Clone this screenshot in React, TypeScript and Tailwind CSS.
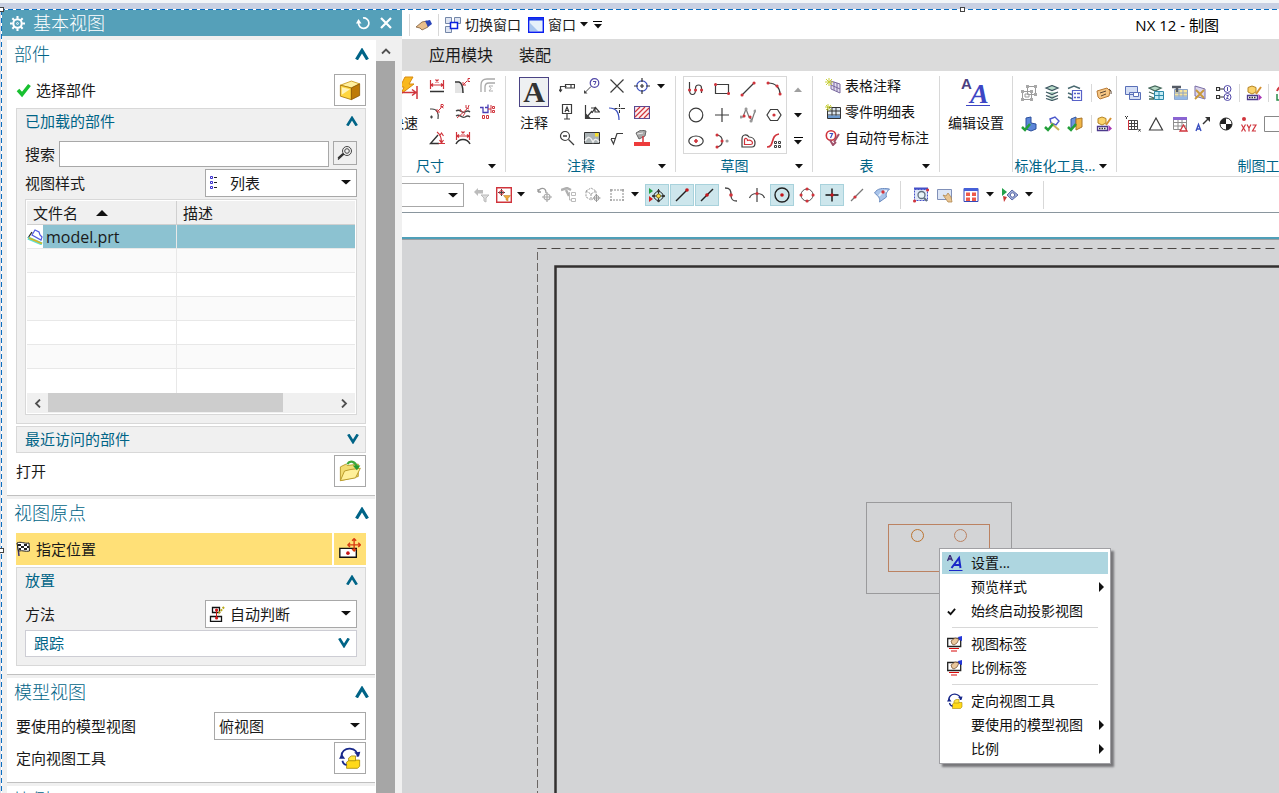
import type { ReactNode } from "react";
import clsx from "clsx";
import { twMerge } from "tailwind-merge";

const red = "#d0343c";
const ink = "#3c3c3c";
const blue = "#3a4fc0";

const icons: Record<string, ReactNode> = {
  // dimensions
  linear: (
    <>
      <path d="M1.500 2v9M14.500 2v9M2 7h12M4 5.500 2 7l2 1.500M12 5.500 14 7l-2 1.500M6.500 1.500l3 3M9.500 1.500l-3 3" stroke={red} strokeWidth="1.200" />
      <path d="M1 13.500h14" stroke="#333" strokeWidth="1.500" />
    </>
  ),
  chamfer: (
    <>
      <path d="M0 5h4l4 5v5H0z" fill="#e4e4e4" stroke="none" />
      <path d="M0 4h4c3 1 4 4 4 11" stroke="#333" strokeWidth="1.500" />
      <path d="M8 7l4-4M8 4v3h3M15 .5h-2v3h2" stroke={red} />
    </>
  ),
  thickness: (
    <>
      <path d="M1 14V7c0-4 2-6 6-6h8M5 14V9c0-3 1-4 4-4h6" stroke="#a9a9a9" strokeWidth="1.300" />
      <path d="M13 8H9l2 2.500-2 2.500h4" stroke="#b0b0b0" />
    </>
  ),
  radial: (
    <>
      <path d="M1 5h2c5 0 7 4 6 10M1 13h3M2.500 11.500v3" stroke="#444" strokeWidth="1.200" />
      <path d="M8 8l4-4M8 5v3h3M12 4V.5h2l.5 1-.5 1h-2l2.500 1.500" stroke={red} />
    </>
  ),
  curveDim: (
    <>
      <path d="M1 7c4-3 6 3 9 1s4-1 5 0M1 12c4-3 6 3 9 1s4-1 5 0" stroke="#444" strokeWidth="1.300" />
      <path d="M2 14 13 4M5 5l2 3M8 12l2-3M11 1v3l3 1M14 1l-1 3" stroke={red} />
    </>
  ),
  ordinate: (
    <>
      <path d="M0 3.500h3v5h5v-8M5 3.500h3" stroke="#4b3fb5" strokeWidth="1.300" />
      <path d="M11 1v8M8 5h3M12.500 2.500h2v2h-2zM12.500 6.500h2v2h-2zM2.500 11.500h2v3h-2zM6.500 11.500h2v3h-2z" stroke={red} />
    </>
  ),
  angular: (
    <>
      <path d="M9 5 1.500 13.500H10" stroke="#333" strokeWidth="1.400" />
      <path d="M8 2c3 2 4.500 6 4.500 11M9.500 13.500H16M10.500 6 12.500 3l2 3M10.500 10l2 3 2-3" stroke={red} strokeWidth="1.200" />
    </>
  ),
  arcLength: (
    <>
      <path d="M1.500 2v8M14.500 2v8M2 6h12M4 4.500 2 6l2 1.500M12 4.500 14 6l-2 1.500M6.500 1.500l3 3M9.500 1.500l-3 3" stroke={red} strokeWidth="1.200" />
      <path d="M1 14c3-6 11-6 14 0" stroke="#333" strokeWidth="1.500" />
    </>
  ),
  // annotation
  featureFrame: <path d="M1.500 13V8.500h6M0 11.500l1.500 2 1.500-2M6.500 6.500h9v3.500h-9zM12 6.500V10" stroke={ink} strokeWidth="1.200" />,
  balloon: (
    <>
      <circle cx="10.500" cy="5" r="4.300" stroke="#5148a8" strokeWidth="1.200" />
      <path d="M9 3.500h3L10.500 7" stroke="#5148a8" />
      <path d="M7 8.500 1.500 14" stroke="#444" />
      <path d="M0 12v3.500h3.500z" fill="#444" stroke="none" />
    </>
  ),
  cross: <path d="M1.500 1.500l13 13M14.500 1.500l-13 13" stroke={ink} strokeWidth="1.200" />,
  centerMark: (
    <>
      <circle cx="8" cy="8" r="5.200" stroke={blue} strokeWidth="1.200" />
      <path d="M8 0v4M8 12v4M0 8h4M12 8h4M8 6v4M6 8h4" stroke="#333" strokeWidth="1.200" />
    </>
  ),
  datum: <path d="M3.500 .5h9v9h-9zM8 9.500v5M5 15h6M6 8l2-5 2 5M7 6.500h2" stroke={ink} strokeWidth="1.200" />,
  roughFrame: (
    <>
      <path d="M1.500 1v13.500H16M2 14l6-7M7 4h4L8 9M11 3v5h4.500L11 3" stroke={ink} strokeWidth="1.200" />
      <path d="M1.500 9v5.500H7z" fill={ink} stroke="none" />
    </>
  ),
  centerLine: (
    <>
      <path d="M0 4c7 0 10 4 10 12" stroke={blue} strokeWidth="1.200" />
      <path d="M5.500 4.500h3M12 4.500h4M10.500 0v3M10.500 6v3M9.500 4.500h2" stroke="#333" />
    </>
  ),
  hatch: (
    <>
      <path d="M.5 2.500h15v12H.5z" fill="#fdeeee" stroke="#5a4a92" strokeWidth="1.200" />
      <path d="M1 8l5-5M1 13 11 3M5 14 15 4M10 14l5-5" stroke={red} strokeWidth="1.200" />
    </>
  ),
  zoomOut: (
    <>
      <circle cx="6" cy="6" r="4.500" stroke={ink} strokeWidth="1.200" />
      <path d="M4 6h4M9.500 9.500 15 15" stroke={ink} strokeWidth="1.300" />
    </>
  ),
  image: (
    <>
      <path d="M.5 2.500h15v11H.5z" fill="#aab2b4" stroke="#333" />
      <path d="M1 11c3-5 5-5 8 1 2-4 4-3 6 0" stroke="#eee" strokeWidth="1.500" />
      <path d="M11 3h3.500v3.500H11z" fill="#f6df2c" stroke="none" />
    </>
  ),
  surface: <path d="M2 9l2.500 5L8 3.500h6M2 8.500h5" stroke={ink} strokeWidth="1.200" />,
  paint: (
    <>
      <path d="M2 3l5-3 5 1-1 5-6 3z" fill="#a8a8a8" stroke="#666" />
      <path d="M3 4l6-1" stroke="#eee" />
      <path d="M9 6v6" stroke={red} strokeWidth="1.500" />
      <path d="M0 12h16v4H0z" fill="#ee3b3b" stroke="none" />
    </>
  ),
  // sketch
  profile: (
    <>
      <path d="M1.500 1v8c0 6 6 6 6 0V7c0-4 6-4 6 0v5" stroke={ink} strokeWidth="1.200" />
      <path d="M1.500 9h.1M7.500 9h.1M13.500 9h.1" stroke={red} strokeWidth="3" strokeLinecap="round" />
    </>
  ),
  rect: (
    <>
      <path d="M1.500 3.500h13v9h-13z" stroke={ink} strokeWidth="1.200" />
      <path d="M1.500 3.500h.1M14.500 12.500h.1" stroke={red} strokeWidth="3" strokeLinecap="round" />
    </>
  ),
  line: (
    <>
      <path d="M2 14 14 2" stroke={ink} strokeWidth="1.200" />
      <path d="M2 14h.1M14 2h.1" stroke={red} strokeWidth="3" strokeLinecap="round" />
    </>
  ),
  arc: (
    <>
      <path d="M2 2c8 0 12 5 12 11" stroke={ink} strokeWidth="1.200" />
      <path d="M2 2h.1M11 5h.1M14 13h.1" stroke={red} strokeWidth="3" strokeLinecap="round" />
    </>
  ),
  circle: <circle cx="8" cy="8" r="6.800" stroke={ink} strokeWidth="1.200" />,
  plus: <path d="M8 1v14M1 8h14" stroke={ink} strokeWidth="1.200" />,
  spline: (
    <>
      <path d="M1 10h2l3-8 3 8 3 3 3-9" stroke="#777" strokeWidth="1.200" />
      <path d="M4 9h.1M10 10h.1" stroke={red} strokeWidth="3" strokeLinecap="round" />
      <path d="M6 2h.1M15 4h.1M11 14h.1M1 10h.1" stroke="#999" strokeWidth="3" strokeLinecap="round" />
    </>
  ),
  polygon: (
    <>
      <path d="M4.500 2.500h7L15 8l-3.500 5.500h-7L1 8z" stroke={ink} strokeWidth="1.200" />
      <circle cx="8" cy="8" r="1.600" fill={red} stroke="none" />
    </>
  ),
  ellipse: (
    <>
      <ellipse cx="8" cy="8" rx="7.200" ry="5" stroke={ink} strokeWidth="1.200" />
      <path d="M8 6v4M6 8h4" stroke={red} strokeWidth="1.700" />
    </>
  ),
  conic: (
    <>
      <path d="M3 2c7 1 7 11 0 12" stroke={ink} strokeWidth="1.200" />
      <path d="M3 2h.1M3 14h.1M8 8h.1" stroke={red} strokeWidth="3" strokeLinecap="round" />
      <path d="M13 8h.1" stroke="#999" strokeWidth="3" strokeLinecap="round" />
    </>
  ),
  offset: (
    <>
      <path d="M2 14V6c0-5 5-5 7-2 4 0 6 3 6 6 0 2-1 4-3 4z" stroke={ink} strokeWidth="1.200" />
      <path d="M4.500 11.500V6.500c1-2 3-1 3 1 3-1 5 1 5 2.500 0 1-1 1.500-2 1.500z" stroke={red} strokeWidth="1.200" />
    </>
  ),
  pattern: (
    <>
      <path d="M1 14c8 0 3-12 12-13" stroke={red} strokeWidth="1.700" />
      <path d="M8.500 8.500h2v2h-2zM12.500 8.500h2v2h-2zM8.500 12.500h2v2h-2zM12.500 12.500h2v2h-2z" stroke={ink} />
    </>
  ),
  // tables
  noteTable: (
    <>
      <path d="M6 3l9 3v9l-9-4zM6 7l9 4M9 4v8M12 5v9" fill="#e4def2" stroke="#7a6a9e" />
      <path d="M4 0v8M0 4h8M1 1l6 6M7 1 1 7" stroke="#c8cf3a" />
    </>
  ),
  partsTable: (
    <>
      <path d="M2.500 3.500h13v11h-13zM2.500 7h13M2.500 11h13M7 3.500v11M11 3.500v11" fill="#dfe8f0" stroke="#333" />
      <path d="M3 11.500h12v2.500H3z" fill="#6d9bd0" stroke="none" />
      <path d="M3 0v7M0 3h7M1 1l5 5M6 1 1 6" stroke="#c8cf3a" />
    </>
  ),
  autoBalloon: (
    <>
      <circle cx="6" cy="5.500" r="4.700" fill="#fff" stroke={red} strokeWidth="1.600" />
      <path d="M4.500 3.500h3L5.500 8" stroke={blue} strokeWidth="1.200" />
      <path d="M14 4 9 12M5 10l3 5 3-3" stroke="#a0506a" strokeWidth="2" />
    </>
  ),
  // standardisation tools
  frames: (
    <>
      <path d="M1.500 6.500h9v8h-9zM6.500 1.500h8v8h-8zM4 9h4v3H4z" stroke="#9b9b9b" />
      <path d="M0 5h3v3H0zM9 5h3v3H9zM0 13h3v3H0zM9 13h3v3H9zM5 0h3v3H5zM13 0h3v3h-3zM13 8h3v3h-3z" fill="#a8a8a8" stroke="none" />
    </>
  ),
  layers: (
    <>
      <path d="M2 3l6-2.500L14 3 8 5.500zM2 7l6 2.500L14 7M2 10.500 8 13l6-2.500M2 13.500l6 2 6-2" fill="#b7dcc9" stroke="#3d5560" strokeWidth="1.200" />
    </>
  ),
  layerList: (
    <>
      <path d="M1 3.500 7 1l6 2.500M1 8l5 2M1 12l5 2" stroke="#4a6a70" strokeWidth="1.500" />
      <path d="M5.500 5.500h9v10h-9z" fill="#fff" stroke="#5862c8" strokeWidth="1.200" />
      <path d="M7 8.500h2M10 8.500h3M7 12.500h2M10 12.500h3" stroke="#5862c8" strokeWidth="1.500" />
    </>
  ),
  tag: (
    <>
      <path d="M1 6l10-3 3 3-1 5-9 3-2-2z" fill="#f6c684" stroke="#b87a35" />
      <path d="M4 8l6-2M5 11l5-2M13 4c2 1 2.500 3 2 5" stroke="#5a4634" />
    </>
  ),
  blockCheck: (
    <>
      <path d="M5 2l5-1v6l5 1v5l-5 2-5-2z" fill="#5b86d8" stroke="#2c4f9c" />
      <path d="M1 11l3 3 5-6" stroke="#23a03a" strokeWidth="2.500" />
    </>
  ),
  sketchCheck: (
    <>
      <path d="M6 3l5-2 4 4-3 4-5-2z" fill="#fff" stroke="#4b58cc" strokeWidth="1.400" />
      <path d="M7 7l8 7" stroke="#c9b458" strokeWidth="2" />
      <path d="M1 11l3 3 5-6" stroke="#23a03a" strokeWidth="2.500" />
    </>
  ),
  cubeCheck: (
    <>
      <path d="M4 3l5-2v9l-5 2z" fill="#6b93dc" stroke="#35589e" />
      <path d="M9 3l6-1v9l-6 3z" fill="#f0b545" stroke="#a9742a" />
      <path d="M1 11l3 3 5-6" stroke="#23a03a" strokeWidth="2.500" />
    </>
  ),
  cubeEdit: (
    <>
      <path d="M2 2.500 6 1l4 1.500V7L6 9 2 7z" fill="#fbd36a" stroke="#b58425" />
      <path d="M15 2l-5 7" stroke="#d49032" strokeWidth="2" />
      <path d="M1.500 10.500h10v4h-10z" fill="#fff" stroke="#4c3a8c" strokeWidth="1.300" />
      <path d="M3 12.500h7" stroke="#333" strokeWidth="1.500" strokeDasharray="1.500 1" />
      <path d="M12.500 9l3.500 3.500-3.500 3z" fill="#a935b5" stroke="none" />
    </>
  ),
  sheets: (
    <>
      <path d="M.5 1.500h12v8H.5zM4.500 7.500h11v7h-11z" fill="#d5dff5" stroke="#5a70b8" />
      <path d="M8.500 7.500h5v4h-5z" fill="#fff" stroke="#5a70b8" />
    </>
  ),
  layerGrid: (
    <>
      <path d="M1 3l6-2 6 2-6 3zM1 7l5 2M1 11l5 2M1 14h5" fill="#b5d8c5" stroke="#45685c" strokeWidth="1.300" />
      <path d="M6.500 6.500h9v8h-9zM11 6.500v8M6.500 10.500h9" fill="#c6ecf5" stroke="#2a88a8" />
    </>
  ),
  hammerTable: (
    <>
      <path d="M2.500 4.500h13v10h-13zM2.500 8h13M2.500 11h13M7 4.500v10M11 4.500v10" fill="#f8e49a" stroke="#8ba2c8" />
      <path d="M3 11.500h12v3H3z" fill="#94b8e6" stroke="none" />
      <path d="M0 2h9M5 2v5" stroke="#555b66" strokeWidth="2.500" />
    </>
  ),
  mirror: (
    <>
      <path d="M3 1l10 3v10L3 11z" fill="#dcd6ee" stroke="#7a6ea6" />
      <path d="M3 14 12 5M4 5l8 8" stroke="#c8993a" strokeWidth="1.800" />
    </>
  ),
  refList: (
    <>
      <path d="M.5 2.500h3v3h-3zM.5 10.500h3v3h-3zM4 4h4M4 12h4" stroke="#333" strokeWidth="1.200" />
      <circle cx="11.500" cy="4" r="3.500" stroke="#5148a8" />
      <circle cx="11.500" cy="12" r="3.500" stroke="#5148a8" />
      <path d="M11.500 2v4M10.500 10.500h2l-2 3h2" stroke="#5148a8" />
    </>
  ),
  csys: (
    <>
      <path d="M2 9v6h6" stroke="#2a8c4a" strokeWidth="1.500" />
      <path d="M2 6c2-6 9-6 11-2" stroke={red} strokeWidth="2" />
      <path d="M7 9h5v5H7z" fill="#f4bb4a" stroke="none" />
    </>
  ),
  gridXY: (
    <>
      <path d="M3.500 4.500h9v9h-9zM6.500 4.500v9M9.500 4.500v9M3.500 7.500h9M3.500 10.500h9" stroke="#444" />
      <path d="M3.500 4v10" stroke={red} />
      <path d="M0 0l1.500 1.500L3 0M1.500 1.500V3M13.500 13l2 2.500M15.500 13l-2 2.500" stroke="#333" />
    </>
  ),
  triangle: <path d="M8 2l6.500 12h-13z" stroke={ink} strokeWidth="1.200" />,
  tableTri: (
    <>
      <path d="M1.500 2.500h13v11h-13zM1.500 6.500h13M1.500 10h13M6 3v10M10 3v10" stroke="#8c8c8c" />
      <path d="M1 1h14v3H1z" fill="#8a64d2" stroke="none" />
      <path d="M11.500 9l3.500 6H8z" fill="#fff" stroke={red} strokeWidth="1.300" />
    </>
  ),
  leaderA: (
    <>
      <path d="M1 15 3.500 8.500 6 15M2 13h3" stroke={blue} strokeWidth="1.400" />
      <path d="M8 8l5-5" stroke="#333" strokeWidth="1.400" />
      <path d="M10 1h5v5z" fill="#333" stroke="none" />
    </>
  ),
  gravity: (
    <>
      <circle cx="8" cy="8" r="6" fill="#fff" stroke="#222" />
      <path d="M8 8V2a6 6 0 0 0-6 6zM8 8v6a6 6 0 0 0 6-6z" fill="#222" stroke="none" />
    </>
  ),
  xyz: (
    <>
      <circle cx="3" cy="3" r="2" fill={red} stroke="none" />
      <path d="M.5 8.500l4 7M4.500 8.500l-4 7M6 8.500 8 12l2-3.500M8 12v3.500M11.500 9h3.500l-3.500 6H15" stroke={red} strokeWidth="1.200" />
    </>
  ),
  blank: <path d="M.5.5h15v15H.5z" fill="#fff" stroke="#888" />,
  // selection bar
  filterReset: (
    <>
      <path d="M0 5l4-4v2h5v3.500H4V9z" fill="#bcbcbc" stroke="none" />
      <path d="M7 8h8l-3 3v4l-2-1v-3z" fill="#dcdcdc" stroke="#bbb" />
    </>
  ),
  filter: (
    <>
      <path d="M.7.7h14.600v14.600H.7z" fill="#fff" stroke={red} strokeWidth="1.400" />
      <path d="M5.500 2v7M2 5.500h7" stroke="#444" />
      <circle cx="5.500" cy="5.500" r="2" stroke={red} />
      <path d="M7.500 8.500h7l-2.500 3V14l-2-1v-1.500z" fill="#f0a93a" stroke="#b87a20" strokeWidth=".5" />
    </>
  ),
  undoTarget: (
    <>
      <path d="M1 5V2M1 5h3M1 5c2-5 8-5 8 1" stroke="#999" strokeWidth="1.300" />
      <circle cx="10" cy="10" r="3" stroke="#aaa" strokeWidth="1.200" />
      <path d="M10 5v10M5 10h10" stroke="#aaa" strokeWidth="1.200" />
    </>
  ),
  hammerTree: (
    <>
      <path d="M0 3l6-2 4 2M5 3l3 6" stroke="#b0b0b0" strokeWidth="2.500" />
      <path d="M10.500 5.500h4v3h-4zM10.500 11.500h4v3h-4zM8.500 5v8h2" stroke="#bbb" />
    </>
  ),
  cubeTarget: (
    <>
      <path d="M1 4l5-3 5 3v6l-5 3-5-3zM1 4l5 3 5-3M6 7v6" stroke="#999" strokeDasharray="2 1" />
      <circle cx="11.500" cy="11" r="2.500" stroke="#999" fill="#fff" />
      <path d="M11.500 7v8M8 11h7.500" stroke="#999" />
    </>
  ),
  marquee: (
    <>
      <path d="M2 3h12v10H2z" stroke="#888" strokeDasharray="2 1" />
      <path d="M1 2h2v2H1zM13 2h2v2h-2zM1 12h2v2H1zM13 12h2v2h-2z" fill="#aaa" stroke="none" />
    </>
  ),
  snapAll: (
    <>
      <path d="M0 1l4 3-4 3z" fill="#20a040" stroke="none" />
      <path d="M0 9l4 3-4 3z" fill="#d42020" stroke="none" />
      <path d="M9.500 2v13M3 9h13" stroke="#222" />
      <circle cx="9.500" cy="9" r="4.500" stroke="#222" />
      <circle cx="9.500" cy="9" r="2" fill="#ffe14a" stroke="#8a7a20" />
      <path d="M9.500 4h.1M9.500 14h.1M4.500 9h.1M14.500 9h.1" stroke="#333" strokeWidth="2.500" strokeLinecap="round" />
    </>
  ),
  snapEnd: (
    <>
      <path d="M2 14 13 3" stroke="#222" strokeWidth="1.400" />
      <circle cx="13" cy="3" r="1.800" fill="#c4161c" stroke="none" />
    </>
  ),
  snapMid: (
    <>
      <path d="M2 14 14 2" stroke="#222" strokeWidth="1.400" />
      <circle cx="8" cy="8" r="1.800" fill="#c4161c" stroke="none" />
    </>
  ),
  snapCtrl: (
    <>
      <path d="M1 1c5 0 6 2 6 7s2 6 6 6" stroke="#444" strokeWidth="1.300" />
      <circle cx="7" cy="8" r="1.800" fill={red} stroke="none" />
    </>
  ),
  snapCross: (
    <>
      <path d="M.5 11c2-6 13-6 15 0M8 1v14" stroke="#444" strokeWidth="1.200" />
      <circle cx="8" cy="6.500" r="1.600" fill={red} stroke="none" />
    </>
  ),
  snapCenter: (
    <>
      <circle cx="8" cy="8" r="7" stroke="#222" strokeWidth="1.400" />
      <circle cx="8" cy="8" r="1.800" fill="#c4161c" stroke="none" />
    </>
  ),
  snapQuad: (
    <>
      <circle cx="8" cy="8" r="6" stroke="#555" />
      <path d="M8 2h.1M8 14h.1M2 8h.1M14 8h.1" stroke={red} strokeWidth="3" strokeLinecap="round" />
    </>
  ),
  snapPoint: (
    <>
      <path d="M8 1.500v13M1.500 8h13" stroke="#111" strokeWidth="1.400" />
      <circle cx="8" cy="8" r="1.700" fill="#c4161c" stroke="none" />
    </>
  ),
  snapCurve: (
    <>
      <path d="M2 14 14 2" stroke="#777" strokeWidth="1.200" />
      <circle cx="6" cy="10" r="1.600" fill={red} stroke="none" />
    </>
  ),
  snapFace: (
    <>
      <path d="M.5 6c3-5 8-5 15-4-3 3-4 5-3 8l-7 5c1-3-1-6-5-9z" fill="#a9c4ea" stroke="#6c8cc0" />
      <path d="M5 9c2-3 4-5 8-5" stroke="#e6f0fc" strokeWidth="2" />
      <circle cx="9" cy="5" r="1.700" fill={red} stroke="none" />
    </>
  ),
  zoomWindow: (
    <>
      <path d="M1.500 2.500h13v11h-13z" fill="#e0e8f8" stroke="#4450c8" strokeDasharray="2 1" />
      <path d="M1 1.500h14" stroke="#4450c8" strokeWidth="2" />
      <circle cx="8.500" cy="8" r="3.500" fill="#e8f4f8" stroke="#607080" strokeWidth="1.300" />
      <path d="M11 11l3 3" stroke="#607080" strokeWidth="2" />
      <path d="M14.500 3h.1M1.500 14h.1" stroke={red} strokeWidth="3" strokeLinecap="round" />
    </>
  ),
  pan: (
    <>
      <path d="M.5 2.500h14v10H.5z" fill="#dde6f6" stroke="#8090b8" />
      <path d="M6 8l3 1 2-3 3 4 1 5h-4z" fill="#e8c492" stroke="#b08850" strokeWidth=".8" />
    </>
  ),
  fit: (
    <>
      <path d="M1 1.500h14v13H1z" fill="#fff" stroke="#3648b8" />
      <path d="M1 1h14v3H1z" fill="#4560d8" stroke="none" />
      <path d="M3 5.500h4v3.500H3zM9 5.500h4v3.500H9zM3 10.500h4V14H3zM9 10.500h4V14H9z" fill="#ee5a4a" stroke="none" />
    </>
  ),
  orient: (
    <>
      <path d="M0 1l5 4-5 4z" fill="#22a04a" stroke="none" />
      <path d="M1 9l4 1-3 5z" fill="#c83a3a" stroke="none" />
      <path d="M5 8l5-5 6 5-6 5z" fill="#a2b0dc" stroke="#5d6ca8" />
      <circle cx="10.500" cy="8" r="2.200" fill="#fff" stroke="#5d6ca8" />
    </>
  ),
  // title bar
  hand: (
    <>
      <path d="M0 10l6-5 5-1 1 6-6 3-2-2z" fill="#e9bf8c" stroke="#7c5b3a" strokeWidth=".8" />
      <path d="M9 4l5-1 2 4-4 3z" fill="#2b45b8" stroke="none" />
    </>
  ),
  switchWin: (
    <>
      <path d="M.5.5h6v6h-6zM9.500.5h6v6h-6zM.5 9.500h6v6h-6z" fill="#dfe5f2" stroke="#7487a8" />
      <path d="M5.500 5.500h7v6h-7z" fill="#fff" stroke="#0a20e0" strokeWidth="1.500" />
    </>
  ),
  window: (
    <>
      <path d="M.7.7h14.600v14.600H.7z" fill="#e6f1fa" stroke="#0a1ef0" strokeWidth="1.400" />
      <path d="M2 6v8h8z" fill="#a7c6ee" stroke="none" />
      <path d="M1 1h14v2.500H1z" fill="#1736e8" stroke="none" />
    </>
  ),
  // dialog
  check: <path d="M2 8l4 4.500L13.500 3" stroke="#18c030" strokeWidth="3.500" />,
  flag: (
    <>
      <path d="M1.500 2 3 15" stroke="#3a3070" strokeWidth="1.500" />
      <path d="M1 2c4-2 7 1 12 0l.5 8c-4 1-7-1-11 0z" fill="#fff" stroke="#222" />
      <path d="M2 3h3v2H2zM8 3h3v2H8zM5 5h3v2H5zM11 5h2v2h-2zM3 7h2v2H3zM8 7h3v2H8z" fill="#222" stroke="none" />
    </>
  ),
  find: (
    <>
      <circle cx="10" cy="6" r="4.500" stroke="#444" />
      <circle cx="10" cy="6" r="2.300" stroke="#444" />
      <path d="M7 9l-6 5.500M6 8.500l-5 4.500" stroke="#333" strokeWidth="1.300" />
    </>
  ),
  cube: (
    <>
      <path d="M1 4.500 9 1.500l6 2-6 3z" fill="#fff0a0" stroke="#c79414" strokeWidth=".6" />
      <path d="M1 4.500l8 2V15l-8-2.500z" fill="#ffd640" stroke="#a87408" strokeWidth=".6" />
      <path d="M9 6.500l6-3V12l-6 3z" fill="#bd7a08" stroke="#8a5806" strokeWidth=".6" />
      <path d="M2 6l6 1.500-6 4z" fill="#fff3b8" stroke="none" />
    </>
  ),
  folder: (
    <>
      <path d="M1 5l4-2 1 1 8-1v9L1 15z" fill="#f2dc72" stroke="#b89a2a" strokeWidth=".7" />
      <path d="M1 15l3-7 4-1 7.500-1L12 13z" fill="#fff09a" stroke="#b89a2a" strokeWidth=".7" />
      <path d="M6 3c2-3 6-2 7 2" stroke="#40a83a" strokeWidth="1.600" />
      <path d="M10 4h5.500L13 7.500z" fill="#259a30" stroke="none" />
    </>
  ),
  place: (
    <>
      <path d="M.6 7.500h12v6.500h-12z" fill="#fff" stroke="#111" />
      <circle cx="6.500" cy="11" r="1.300" fill="#c81414" stroke="none" />
      <path d="M11 .5v9M6.500 5h9M9.500 2 11 .5 12.500 2M9.500 8 11 9.500 12.500 8M8 3.500 6.500 5 8 6.500M14 3.500 15.500 5 14 6.500" stroke="#d83a10" />
    </>
  ),
  list: (
    <>
      <path d="M1.500 1.500h2v2h-2zM1.500 6.500h2v2h-2zM1.500 11.500h2v2h-2z" stroke="#3a30d0" />
      <path d="M5 2.500h3M5 7.500h3M5 12.500h3" stroke="#222" />
    </>
  ),
  infer: (
    <>
      <path d="M3.500 1.500h7v5h-7zM1.500 10.500h11v5h-11z" fill="#fff" stroke="#111" strokeWidth="1.300" />
      <path d="M7.500 3v10" stroke="#d01818" />
      <path d="M7.500 4h.1M7.500 12h.1" stroke="#d01818" strokeWidth="3" strokeLinecap="round" />
      <path d="M15 1 9 8" stroke="#b8a818" strokeWidth="2" strokeDasharray="2 1" />
    </>
  ),
  part: (
    <>
      <path d="M5 6l3-5 4 2 1 3 2 2-1 3z" fill="#fff" stroke="#5058e0" strokeWidth="1.200" />
      <path d="M1 9l4-6" stroke="#222" strokeWidth="1.300" />
      <path d="M1 9l14 6" stroke="#62e0d0" strokeWidth="3" />
      <path d="M2 9l13 5.500" stroke="#d8b420" strokeWidth="1.500" />
    </>
  ),
  rotateView: (
    <>
      <path d="M5.500 11l2-1.500H15V14l-1.500 1.500h-8z" fill="#ffd91a" stroke="#a88a08" strokeWidth=".6" />
      <path d="M7 8l2-1.500h3V10H7z" fill="#ffe640" stroke="#a88a08" strokeWidth=".6" />
      <path d="M2 8C1 3 5 1 8 1.200 11 1.500 13.500 3 13.500 7M2.500 10c.5 2 2 3 3 3" stroke="#18288a" strokeWidth="1.300" />
      <path d="M0 8.500 2 5l2.500 3.500zM11 4l4.500-.5L14.500 7z" fill="#18288a" stroke="none" />
    </>
  ),
  label: (
    <>
      <path d="M.7 2.500h13v8H.7z" fill="#fff" stroke="#222" strokeWidth="1.300" />
      <path d="M2 12.500h10M4 15h6" stroke="#d80808" strokeWidth="1.200" />
      <path d="M4 5l4-3 4 1-2 4-3 2-2-1z" fill="#eac79c" stroke="#7c5b3a" strokeWidth=".8" />
      <path d="M11 1l4-1v5l-3-1z" fill="#2336d8" stroke="none" />
    </>
  ),
  styleA: (
    <>
      <path d="M.5 6 3 0l2.500 6M1.500 4h3" stroke="#3a2a78" strokeWidth="1.300" />
      <path d="M4.500 13 12 3l1.500 10M7 10h6" stroke="#1a28c8" strokeWidth="2" />
      <path d="M2 15.500h13.500" stroke="#1a28c8" />
    </>
  ),
};

function Icon({ name, size = "size-4", className }: { name: string; size?: string; className?: string }) {
  return (
    <svg viewBox="0 0 16 16" fill="none" className={clsx("block shrink-0", size, className)}>
      {icons[name]}
    </svg>
  );
}

function Caret({ className }: { className?: string }) {
  return (
    <svg
      viewBox="0 0 8 5"
      preserveAspectRatio="none"
      className={twMerge("block h-[5px] w-2 shrink-0", className)}
    >
      <path d="M0 0h8L4 4.500z" fill="#111" />
    </svg>
  );
}

function CaretButton({ className }: { className?: string }) {
  return (
    <button aria-label="更多" className={twMerge("flex h-6 w-3 shrink-0 items-center justify-center", className)}>
      <Caret />
    </button>
  );
}

function Chevron({ down = false, size = "h-3 w-[14px]" }: { down?: boolean; size?: string }) {
  return (
    <svg viewBox="0 0 14 12" preserveAspectRatio="none" fill="none" className={clsx("block shrink-0", size)}>
      <path d={down ? "M1.500 .5 7 9.500 12.500 .5" : "M1.500 11.500 7 2.500l5.500 9"} stroke="#006487" strokeWidth="3.200" />
    </svg>
  );
}

function Tool({ name, size, className }: { name: string; size?: string; className?: string }) {
  return (
    <button
      aria-label={name}
      className={twMerge("flex h-[26px] shrink-0 items-center justify-center", className)}
    >
      <Icon name={name} size={size} />
    </button>
  );
}

/* ---------- dialog ---------- */

function Section({ title, children }: { title: string; children?: ReactNode }) {
  return (
    <section className="mb-[3px] border-b border-[#c0c0c0] bg-white">
      <button className="flex h-[30px] w-full items-center justify-between pr-[6px] pb-[2px] pl-[7px] text-lg leading-6 font-light text-[#006487]">
        <span>{title}</span>
        <Chevron />
      </button>
      <div className="flex flex-col gap-[2px] px-[9px] pt-1 pb-2">{children}</div>
    </section>
  );
}

function Group({ title, children }: { title: string; children: ReactNode }) {
  return (
    <div className="border border-[#d8d8d8] bg-[#f0f0f0] pb-2">
      <button className="flex h-6 w-full items-center justify-between pr-[7px] pl-2 text-[#006487]">
        <span>{title}</span>
        <Chevron size="h-[10px] w-3" />
      </button>
      <div className="flex flex-col gap-[2px] px-2 pt-2">{children}</div>
    </div>
  );
}

function Collapsed({ title, className }: { title: string; className: string }) {
  return (
    <button
      className={clsx(
        "flex h-[27px] w-full items-center justify-between border pr-[6px] pb-[2px] pl-2 text-[#006487]",
        className,
      )}
    >
      <span>{title}</span>
      <Chevron down size="h-[10px] w-3" />
    </button>
  );
}

function SelectRow({ id, label, value, icon }: { id: string; label: string; value: string; icon?: string }) {
  return (
    <div className="flex items-center justify-between">
      <label htmlFor={id}>{label}</label>
      <div className="relative">
        <select
          id={id}
          defaultValue={value}
          className={clsx(
            "block h-7 w-[152px] appearance-none border border-[#a8a8a8] bg-white text-[#1a1a1a]",
            icon ? "pl-6" : "pl-1",
          )}
        >
          <option>{value}</option>
        </select>
        {icon && <Icon name={icon} className="pointer-events-none absolute top-[6px] left-1" />}
        <Caret className="pointer-events-none absolute top-[11px] right-[6px] w-[10px]" />
      </div>
    </div>
  );
}

function SquareButton({ name, className }: { name: string; className?: string }) {
  return (
    <button
      aria-label={name}
      className={clsx("flex size-8 shrink-0 items-center justify-center", className ?? "border border-[#a8a8a8] bg-white")}
    >
      <Icon name={name} size="size-[22px]" />
    </button>
  );
}

function FileTable() {
  return (
    <div className="border border-[#d8d8d8] bg-white p-px">
      <table className="w-full table-fixed border-separate border-spacing-0">
        <thead>
          <tr className="h-6 bg-[#f0f0f0] text-left">
            <th className="h-6 w-[150px] border-r border-b border-[#d0d0d0] p-0 pl-[6px] leading-5 font-normal">
              <span className="flex items-center gap-[18px]">
                文件名
                <svg viewBox="0 0 12 6" className="h-[6px] w-3">
                  <path d="M6 0l6 6H0z" fill="#111" />
                </svg>
              </span>
            </th>
            <th className="h-6 border-b border-[#d0d0d0] p-0 pl-[6px] leading-5 font-normal">描述</th>
          </tr>
        </thead>
        <tbody>
          <tr className="bg-[#8cc2d1]">
            <td className="h-6 border-r border-b border-[#e8e8e8] p-0">
              <span className="flex items-center">
                <span className="flex h-[23px] w-4 items-center bg-white">
                  <Icon name="part" />
                </span>
                <span className="pl-[3px] text-base leading-5">model.prt</span>
              </span>
            </td>
            <td className="h-6 border-b border-[#e8e8e8] p-0" />
          </tr>
          {[0, 1, 2, 3, 4, 5].map((i) => (
            <tr key={i} className="odd:bg-white even:bg-[#fafafa]">
              <td className={clsx("h-6 border-r border-[#e8e8e8] p-0", i < 5 && "border-b")} />
              <td className={clsx("h-6 border-[#e8e8e8] p-0", i < 5 && "border-b")} />
            </tr>
          ))}
        </tbody>
      </table>
      <div className="flex h-5 items-center bg-[#f0f0f0]">
        <button aria-label="向左" className="flex h-5 w-[21px] items-center justify-center">
          <svg viewBox="0 0 7 9" fill="none" className="h-[9px] w-[7px]">
            <path d="M6 .5 2 4.500l4 4" stroke="#505050" strokeWidth="1.800" />
          </svg>
        </button>
        <div className="flex h-[19px] flex-1 self-start">
          <div className="w-[82%] bg-[#cdcdcd]" />
        </div>
        <button aria-label="向右" className="flex h-5 w-[21px] items-center justify-center">
          <svg viewBox="0 0 7 9" fill="none" className="h-[9px] w-[7px]">
            <path d="M1 .5l4 4-4 4" stroke="#505050" strokeWidth="1.800" />
          </svg>
        </button>
      </div>
    </div>
  );
}

function Dialog() {
  return (
    <aside className="flex w-[400px] shrink-0 flex-col bg-[#f0f0f0] text-[15px] leading-5">
      <header className="flex h-[26px] shrink-0 items-center bg-[#55a0b9] pr-[9px] pl-2 text-lg leading-6 font-light text-white">
        <svg viewBox="0 0 16 16" fill="none" stroke="#fff" className="size-[15px]">
          <circle cx="8" cy="8" r="4.500" strokeWidth="2.200" />
          <circle cx="8" cy="8" r="1" />
          <path d="M8 0v3M8 13v3M0 8h3M13 8h3M2.500 2.500l2 2M11.500 11.500l2 2M13.500 2.500l-2 2M4.500 11.500l-2 2" strokeWidth="2.200" />
        </svg>
        <h1 className="flex-1 pl-2">基本视图</h1>
        <button aria-label="重置" className="mr-[9px]">
          <svg viewBox="0 0 14 14" fill="none" className="block size-[14px]">
            <path d="M7 2a5.200 5.200 0 1 1-4.500 5" stroke="#fff" strokeWidth="1.700" />
            <path d="M0 7.500 2.500 3l3 4.500z" fill="#fff" />
          </svg>
        </button>
        <button aria-label="关闭">
          <svg viewBox="0 0 14 14" fill="none" className="block size-[14px]">
            <path d="M2 2l10 10M12 2 2 12" stroke="#fff" strokeWidth="2.200" />
          </svg>
        </button>
      </header>

      <div className="flex min-h-0 flex-1 pt-1 pr-[7px] pl-[5px]">
        <div className="min-w-0 flex-1 overflow-hidden">
          <Section title="部件">
            <div className="flex items-center">
              <Icon name="check" />
              <span className="flex-1 pl-1">选择部件</span>
              <SquareButton name="cube" />
            </div>
            <Group title="已加载的部件">
              <div className="flex items-center">
                <label htmlFor="search">搜索</label>
                <input id="search" className="ml-1 h-[26px] min-w-0 flex-1 border border-[#a8a8a8] bg-white px-1" />
                <button
                  aria-label="查找"
                  className="ml-1 flex size-6 items-center justify-center self-start border border-[#a8a8a8]"
                >
                  <Icon name="find" />
                </button>
              </div>
              <SelectRow id="style" label="视图样式" value="列表" icon="list" />
              <FileTable />
            </Group>
            <Collapsed title="最近访问的部件" className="border-[#d8d8d8] bg-[#f0f0f0]" />
            <div className="flex items-center justify-between">
              <span>打开</span>
              <SquareButton name="folder" />
            </div>
          </Section>

          <Section title="视图原点">
            <div className="flex gap-[2px]">
              <div className="flex flex-1 items-center bg-[#ffe077]">
                <Icon name="flag" />
                <span className="pl-1">指定位置</span>
              </div>
              <SquareButton name="place" className="bg-[#ffe077]" />
            </div>
            <Group title="放置">
              <SelectRow id="method" label="方法" value="自动判断" icon="infer" />
              <Collapsed title="跟踪" className="border-[#cdcdd4] bg-white" />
            </Group>
          </Section>

          <Section title="模型视图">
            <SelectRow id="view" label="要使用的模型视图" value="俯视图" />
            <div className="flex items-center justify-between">
              <span>定向视图工具</span>
              <SquareButton name="rotateView" />
            </div>
          </Section>

          <Section title="比例" />
        </div>

        <div className="flex w-5 shrink-0 flex-col border-l border-white">
          <button aria-label="向上" className="flex h-[21px] items-center justify-center">
            <svg viewBox="0 0 10 8" fill="none" className="h-2 w-[10px]">
              <path d="M1 6.500l4-4 4 4" stroke="#505050" strokeWidth="1.800" />
            </svg>
          </button>
          <div className="flex-1 bg-[#a6a6a6]" />
        </div>
      </div>
    </aside>
  );
}

/* ---------- ribbon ---------- */

function RibbonGroup({
  label,
  className,
  caret,
  children,
}: {
  label?: string;
  className: string;
  caret?: boolean;
  children: ReactNode;
}) {
  return (
    <div className={clsx("flex shrink-0 flex-col border-r border-[#d8d8d8] text-sm leading-5", className)}>
      <div className="flex h-20 shrink-0 items-start">{children}</div>
      <div className="flex h-5 shrink-0 items-center whitespace-nowrap text-[#006487]">
        <span className="flex-1 text-center">{label}</span>
        {caret && <CaretButton className="mr-[7px] h-5" />}
      </div>
    </div>
  );
}

const dims = ["linear", "chamfer", "thickness", "radial", "curveDim", "ordinate", "angular", "arcLength"];
const notes = [
  "featureFrame", "balloon", "cross", "centerMark",
  "datum", "roughFrame", "centerLine", "hatch",
  "zoomOut", "image", "surface", "paint",
];
const sketch = [
  "profile", "rect", "line", "arc",
  "circle", "plus", "spline", "polygon",
  "ellipse", "conic", "offset", "pattern",
];
const tables = [
  { icon: "noteTable", text: "表格注释" },
  { icon: "partsTable", text: "零件明细表" },
  { icon: "autoBalloon", text: "自动符号标注" },
];

function Ribbon() {
  return (
    <div className="flex h-[106px] shrink-0 overflow-hidden border-b border-[#d8d8d8] bg-white pt-[5px] pb-1">
      <RibbonGroup label="尺寸" className="-ml-7 w-[132px]" caret>
        <button className="ml-4 flex w-7 flex-col items-end whitespace-nowrap">
          <svg viewBox="0 0 18 26" fill="none" className="h-[26px] w-[18px]">
            <path d="M5 1h8l-4 7h5L1 18l3-7H0z" fill="#f9b81e" stroke="#d88a10" />
            <path d="M2 16.500h14M17 10v13M12 13.500l4 3-4 3" stroke={red} strokeWidth="1.500" />
          </svg>
          <span className="mt-[11px]">快速</span>
        </button>
        <div className="-mt-[3px] ml-[6px] grid grid-cols-[26px_25px_25px]">
          {dims.map((n) => (
            <Tool key={n} name={n} />
          ))}
        </div>
      </RibbonGroup>

      <RibbonGroup label="注释" className="w-[170px]" caret>
        <button className="ml-[13px] flex w-[30px] flex-col items-center whitespace-nowrap">
          <span className="mt-px flex size-[30px] items-center justify-center border border-[#4a4384] bg-[#eef0f2] font-['Liberation_Serif',serif] text-[30px] leading-7 font-bold text-[#333]">
            A
          </span>
          <span className="mt-[6px]">注释</span>
        </button>
        <div className="-mt-[3px] ml-[5px] grid grid-cols-[25px_25px_25px_25px]">
          {notes.map((n) => (
            <Tool key={n} name={n} />
          ))}
        </div>
        <CaretButton className="-mt-[2px] ml-px" />
      </RibbonGroup>

      <RibbonGroup label="草图" className="w-[137px]" caret>
        <div className="ml-[7px] grid h-[78px] w-[104px] grid-cols-[26px_26px_26px_26px] grid-rows-[26px_26px_26px] border border-[#d8d8d8]">
          {sketch.map((n) => (
            <Tool key={n} name={n} className="mr-[3px] h-6" />
          ))}
        </div>
        <div className="ml-1 flex flex-col">
          <button aria-label="上" className="flex h-[26px] w-[14px] items-center justify-center">
            <Caret className="rotate-180 opacity-40" />
          </button>
          <CaretButton className="h-[26px] w-[14px]" />
          <button aria-label="展开" className="flex h-[26px] w-[14px] flex-col items-center justify-center gap-[2px]">
            <span className="h-px w-[9px] bg-black" />
            <Caret />
          </button>
        </div>
      </RibbonGroup>

      <RibbonGroup label="表" className="w-[127px]" caret>
        <div className="-mt-[3px] ml-3 flex flex-col">
          {tables.map((t) => (
            <button key={t.text} className="flex h-[26px] items-center gap-1 whitespace-nowrap text-[#111]">
              <Icon name={t.icon} />
              {t.text}
            </button>
          ))}
        </div>
      </RibbonGroup>

      <RibbonGroup className="w-[73px]">
        <button className="flex flex-1 flex-col items-center whitespace-nowrap text-[#111]">
          <svg viewBox="0 0 32 32" className="size-8">
            <text x="1" y="13" fontSize="15" fontWeight="700" fill="#4a3f80" fontFamily="Liberation Sans">
              A
            </text>
            <text x="10" y="27" fontSize="28" fontWeight="700" fontStyle="italic" fill="#3d46c4" fontFamily="Liberation Serif">
              A
            </text>
            <path d="M6 29.500h24" stroke="#3d46c4" />
          </svg>
          <span className="mt-[5px]">编辑设置</span>
        </button>
      </RibbonGroup>

      <RibbonGroup label="标准化工具..." className="w-[104px]" caret>
        <div className="mt-1 ml-1 grid grid-cols-[23px_23px_23px_30px] grid-rows-[31px_31px]">
          <Tool name="frames" />
          <Tool name="layers" />
          <Tool name="layerList" />
          <Tool name="tag" className="my-1 ml-[5px] h-[18px] border-l border-[#d8d8d8]" />
          <Tool name="blockCheck" />
          <Tool name="sketchCheck" />
          <Tool name="cubeCheck" />
          <Tool name="cubeEdit" className="my-1 ml-[5px] h-[18px] border-l border-[#d8d8d8]" />
        </div>
      </RibbonGroup>

      <RibbonGroup label="制图工具 - GC工具箱" className="w-[390px]" caret>
        <div className="mt-1 ml-1 flex flex-col gap-[5px]">
          <div className="flex">
            <Tool name="sheets" className="w-[23px]" />
            <Tool name="layerGrid" className="w-6" />
            <Tool name="hammerTable" className="w-[23px]" />
            <Tool name="mirror" className="w-[18px]" />
            <Tool name="refList" className="w-[30px]" />
            <Tool name="cubeEdit" className="my-1 h-[18px] w-[29px] border-l border-[#d8d8d8]" />
            <Tool name="csys" className="my-1 h-[18px] w-[29px] border-l border-[#d8d8d8]" />
          </div>
          <div className="flex">
            <Tool name="gridXY" className="w-[23px]" />
            <Tool name="triangle" className="w-6" />
            <Tool name="tableTri" className="w-[23px]" />
            <Tool name="leaderA" className="w-[23px]" />
            <Tool name="gravity" className="w-[23px]" />
            <Tool name="xyz" className="w-[23px]" />
            <Tool name="blank" className="w-[23px]" />
          </div>
        </div>
      </RibbonGroup>
    </div>
  );
}

const snaps = [
  { icon: "snapAll", on: true },
  { icon: "snapEnd", on: true },
  { icon: "snapMid", on: true },
  { icon: "snapCtrl", on: false },
  { icon: "snapCross", on: false },
  { icon: "snapCenter", on: true },
  { icon: "snapQuad", on: false },
  { icon: "snapPoint", on: true },
  { icon: "snapCurve", on: false },
  { icon: "snapFace", on: false },
];

function SelectionBar() {
  return (
    <div className="flex h-9 shrink-0 items-center overflow-hidden border-b border-[#8a969e] bg-white">
      <div className="relative shrink-0">
        <select
          aria-label="选择范围"
          className="block h-6 w-[62px] appearance-none border border-l-0 border-[#a8a8a8] bg-white"
        />
        <Caret className="pointer-events-none absolute top-[10px] right-[6px] w-[10px]" />
      </div>
      <Tool name="filterReset" className="ml-[10px] w-4" />
      <Tool name="filter" className="ml-[6px] w-4" />
      <CaretButton className="ml-[3px]" />
      <Tool name="undoTarget" className="ml-[6px] w-6" />
      <Tool name="hammerTree" className="w-6" />
      <Tool name="cubeTarget" className="w-6" />
      <Tool name="marquee" className="w-6" />
      <CaretButton />
      <div className="ml-1 flex shrink-0 gap-px">
        {snaps.map((s) => (
          <button
            key={s.icon}
            aria-label={s.icon}
            aria-pressed={s.on}
            className={clsx(
              "flex h-[22px] w-6 items-center justify-center border",
              s.on ? "border-[#a8d2dc] bg-[#cde6ec]" : "border-transparent",
            )}
          >
            <Icon name={s.icon} />
          </button>
        ))}
      </div>
      <div className="ml-[6px] h-7 w-px shrink-0 bg-[#d8d8d8]" />
      <Tool name="zoomWindow" className="ml-2 w-6" />
      <Tool name="pan" className="w-6" />
      <Tool name="fit" className="ml-[2px] w-6" />
      <CaretButton className="ml-px" />
      <Tool name="orient" className="ml-[2px] w-6" />
      <CaretButton className="ml-px" />
      <div className="ml-2 h-7 w-px shrink-0 bg-[#d8d8d8]" />
    </div>
  );
}

/* ---------- drawing sheet ---------- */

interface MenuItem {
  text: string;
  icon?: string;
  active?: boolean;
  sub?: boolean;
  checked?: boolean;
}

const menu: MenuItem[][] = [
  [
    { text: "设置...", icon: "styleA", active: true },
    { text: "预览样式", sub: true },
    { text: "始终启动投影视图", checked: true },
  ],
  [
    { text: "视图标签", icon: "label" },
    { text: "比例标签", icon: "label" },
  ],
  [
    { text: "定向视图工具", icon: "rotateView" },
    { text: "要使用的模型视图", sub: true },
    { text: "比例", sub: true },
  ],
];

function ContextMenu() {
  return (
    <div
      role="menu"
      className="absolute top-[308px] left-[537px] w-[172px] border border-[#a0a0a4] bg-white p-[2px] text-sm leading-5 text-[#111] shadow-[3px_3px_2px_#77777a]"
    >
      {menu.map((group, g) => (
        <div key={g} className="flex flex-col">
          {g > 0 && (
            <div className="mx-[10px] flex h-[9px] items-center">
              <hr className="w-full border-[#d8d8d8]" />
            </div>
          )}
          {group.map((item) => (
            <button
              key={item.text}
              role="menuitem"
              className={clsx(
                "my-px flex h-[22px] w-full items-center pr-1 pl-[5px] text-left",
                item.active && "bg-[#aed6e0]",
              )}
            >
              <span className="w-6">
                {item.icon && <Icon name={item.icon} />}
                {item.checked && (
                  <svg viewBox="0 0 10 10" fill="none" className="size-[9px]">
                    <path d="M1 5l3 3 5-6" stroke="#111" strokeWidth="2" />
                  </svg>
                )}
              </span>
              <span className="flex-1">{item.text}</span>
              {item.sub && (
                <svg viewBox="0 0 5 10" className="h-[10px] w-[5px]">
                  <path d="M0 0l5 5-5 5z" fill="#111" />
                </svg>
              )}
            </button>
          ))}
        </div>
      ))}
    </div>
  );
}

function Sheet() {
  return (
    <div className="relative min-h-0 flex-1 overflow-hidden border-t border-[#9a9ea2] bg-[#d3d4d6]">
      <svg className="absolute inset-0 size-full" fill="none">
        <path d="M135.500 2000V8.500" stroke="#6a6664" strokeDasharray="8 3" />
        <path d="M135.500 8.500H3000" stroke="#4a4644" strokeDasharray="9 5" />
        <path d="M153.500 2000V26.500H3000" stroke="#333030" strokeWidth="2.500" />
        <rect x="464.500" y="262.500" width="145" height="91" stroke="#9a9a9c" />
        <rect x="486.500" y="284.500" width="101" height="47" stroke="#bb8262" />
        <circle cx="515.500" cy="295.500" r="6" stroke="#bc7430" />
        <circle cx="558.500" cy="295.500" r="6" stroke="#bb8262" />
      </svg>
      <ContextMenu />
    </div>
  );
}

export default function App() {
  return (
    <div className="relative flex h-screen flex-col overflow-hidden bg-[#dfe5f0] font-['Open_Sans','Noto_Sans_CJK_SC',sans-serif] text-[#1a1a1a]">
      <div className="h-[9px] shrink-0 border-t-[3px] border-[#f2f6f8] bg-[#c8d0e2]" />
      <div className="h-px shrink-0 bg-[repeating-linear-gradient(to_right,#0a6fc2_0_5px,#ffffff_5px_8px)]" />
      <div className="flex min-h-0 flex-1">
        <div className="w-px shrink-0 bg-[#d6dae6]" />
        <div className="w-px shrink-0 bg-[repeating-linear-gradient(to_bottom,#0a6fc2_0_5px,#ffffff_5px_8px)]" />
        <Dialog />
        <main className="flex min-w-0 flex-1 flex-col bg-white">
          <div className="flex h-[29px] shrink-0 items-center text-sm leading-5 whitespace-nowrap">
            <div className="ml-[7px] h-[22px] w-px bg-[#d8d8d8]" />
            <Tool name="hand" className="w-7" />
            <div className="h-[22px] w-px bg-[#d8d8d8]" />
            <button className="ml-[6px] flex items-center gap-1">
              <Icon name="switchWin" />
              切换窗口
            </button>
            <button className="ml-[7px] flex items-center gap-1">
              <Icon name="window" />
              窗口
              <Caret />
            </button>
            <button aria-label="更多命令" className="ml-[5px] flex flex-col items-center gap-[2px]">
              <span className="h-px w-[9px] bg-black" />
              <Caret />
            </button>
            <h2 className="ml-auto pr-[60px] text-[15px] text-black">NX 12 - 制图</h2>
          </div>
          <nav className="flex h-8 shrink-0 items-center gap-[26px] bg-[#dbdbdb] pl-[27px] text-base leading-6">
            <a href="#apps">应用模块</a>
            <a href="#assembly">装配</a>
          </nav>
          <Ribbon />
          <SelectionBar />
          <div className="h-6 shrink-0" />
          <div className="h-[2px] shrink-0 bg-[#4f9fb8]" />
          <Sheet />
        </main>
      </div>
      <span className="absolute top-[7px] -left-px size-[5px] border border-[#444] bg-white" />
      <span className="absolute top-[7px] left-[75%] ml-px size-[5px] border border-[#444] bg-white" />
      <span className="absolute top-[548px] -left-px size-[5px] border border-[#444] bg-white" />
    </div>
  );
}
